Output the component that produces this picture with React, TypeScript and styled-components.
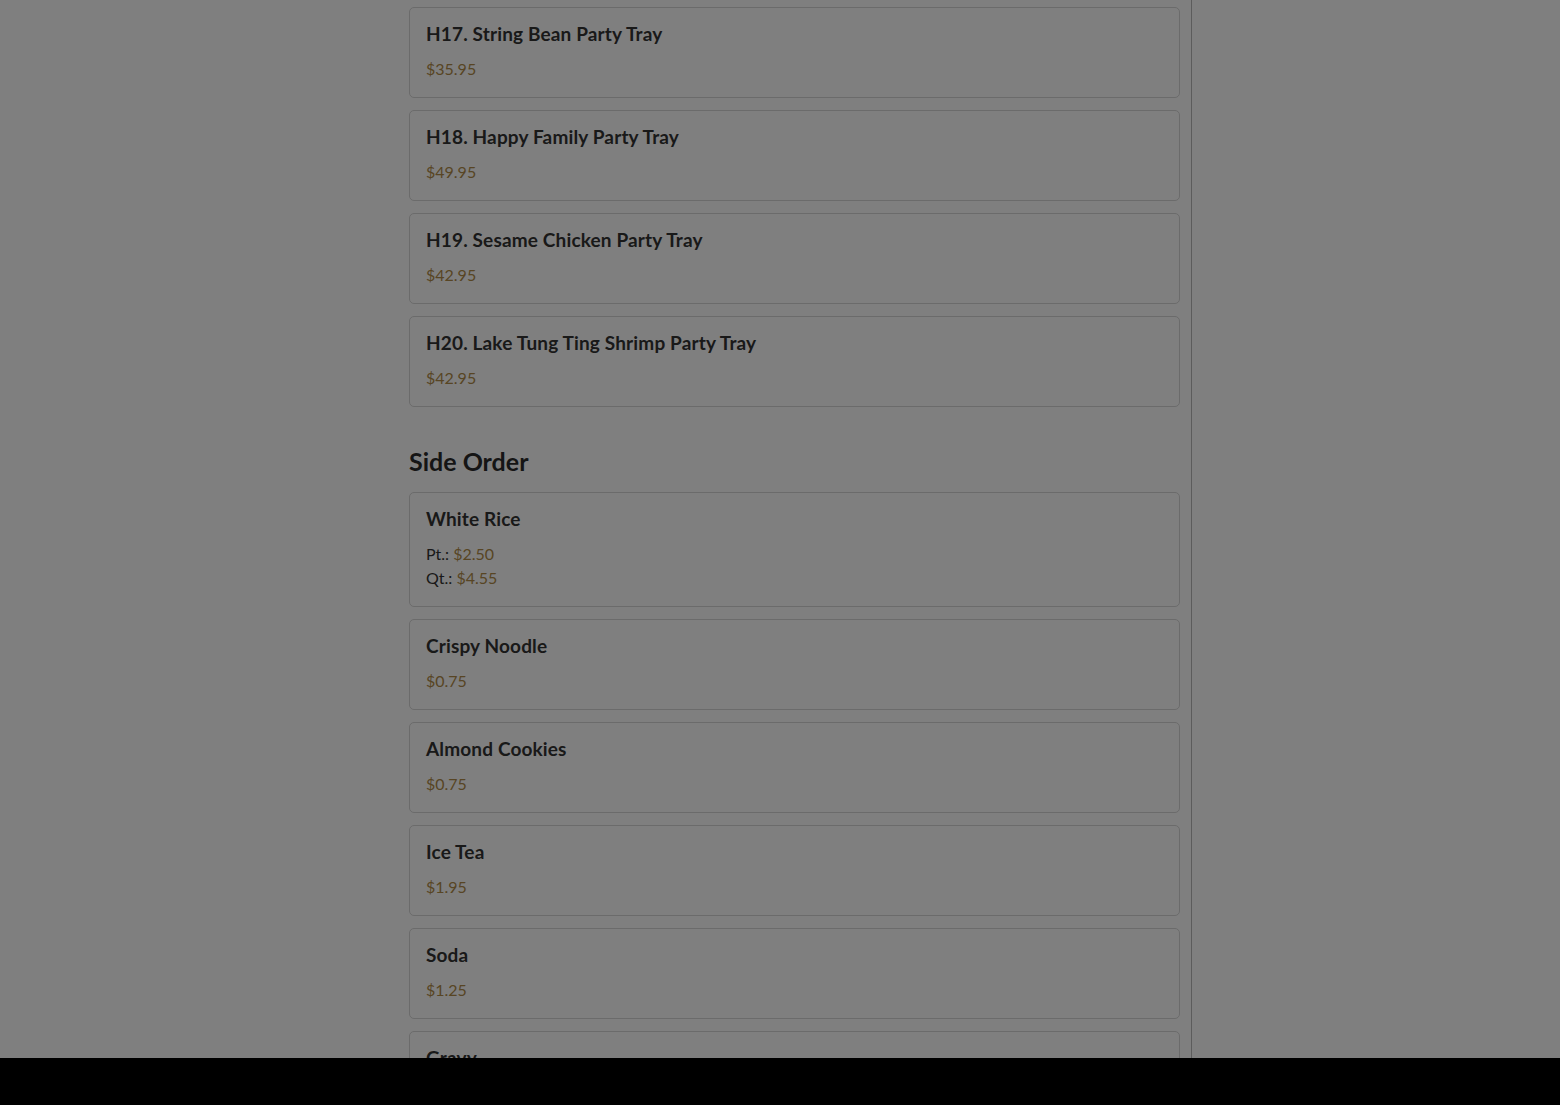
import styled, { createGlobalStyle } from "styled-components";

const GlobalStyle = createGlobalStyle`
  html, body {
    margin: 0;
    padding: 0;
    background: #ffffff;
    font-family: "Lato", "Noto Sans", sans-serif;
    color: #333333;
  }
`;

const Page = styled.div`
  display: flex;
  min-height: 1105px;
`;

const Column = styled.main`
  width: 771px;
  margin-left: 409px;
  padding: 7px 11px 60px 0;
  border-right: 1px solid #b8b8b8;
  display: flex;
  flex-direction: column;
`;

const Section = styled.section`
  display: flex;
  flex-direction: column;
  gap: 12px;
  & + & {
    margin-top: 38px;
  }
`;

const SectionTitle = styled.h2`
  margin: 0 0 3px;
  font-size: 25px;
  line-height: 32px;
  font-weight: 700;
  color: #2b2b2b;
`;

const Card = styled.div`
  border: 1px solid #d6d6d6;
  border-radius: 5px;
  padding: 13px 16px 16px;
  background: #ffffff;
`;

const ItemName = styled.h3`
  margin: 0 0 10px;
  font-size: 19px;
  line-height: 26px;
  font-weight: 700;
  letter-spacing: 0.15px;
  color: #333333;
`;

const PriceLine = styled.div`
  font-size: 16px;
  line-height: 24px;
  color: #333333;
`;

const Price = styled.span`
  color: #b08b48;
`;

const Overlay = styled.div`
  position: fixed;
  inset: 0;
  background: rgba(0, 0, 0, 0.5);
`;

const BottomBar = styled.div`
  position: fixed;
  left: 0;
  right: 0;
  bottom: 0;
  height: 47px;
  background: #000000;
`;

type Item = { name: string; prices: { label?: string; value: string }[] };

const partyTrays: Item[] = [
  { name: "H17. String Bean Party Tray", prices: [{ value: "$35.95" }] },
  { name: "H18. Happy Family Party Tray", prices: [{ value: "$49.95" }] },
  { name: "H19. Sesame Chicken Party Tray", prices: [{ value: "$42.95" }] },
  { name: "H20. Lake Tung Ting Shrimp Party Tray", prices: [{ value: "$42.95" }] },
];

const sideOrder: Item[] = [
  {
    name: "White Rice",
    prices: [
      { label: "Pt.:", value: "$2.50" },
      { label: "Qt.:", value: "$4.55" },
    ],
  },
  { name: "Crispy Noodle", prices: [{ value: "$0.75" }] },
  { name: "Almond Cookies", prices: [{ value: "$0.75" }] },
  { name: "Ice Tea", prices: [{ value: "$1.95" }] },
  { name: "Soda", prices: [{ value: "$1.25" }] },
  { name: "Gravy", prices: [{ value: "$1.00" }] },
];

function MenuCard({ item }: { item: Item }) {
  return (
    <Card>
      <ItemName>{item.name}</ItemName>
      {item.prices.map((p, i) => (
        <PriceLine key={i}>
          {p.label && <>{p.label} </>}
          <Price>{p.value}</Price>
        </PriceLine>
      ))}
    </Card>
  );
}

export default function App() {
  return (
    <>
      <GlobalStyle />
      <Page>
        <Column>
          <Section>
            {partyTrays.map((item) => (
              <MenuCard key={item.name} item={item} />
            ))}
          </Section>
          <Section>
            <SectionTitle>Side Order</SectionTitle>
            {sideOrder.map((item) => (
              <MenuCard key={item.name} item={item} />
            ))}
          </Section>
        </Column>
      </Page>
      <Overlay />
      <BottomBar />
    </>
  );
}
